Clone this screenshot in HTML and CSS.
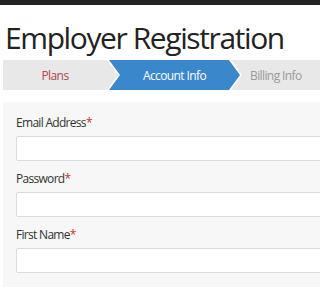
FILE: index.html
```html
<!DOCTYPE html>
<html>
<head>
<meta charset="utf-8">
<link rel="stylesheet" href="styles.css">
</head>
<body>
<div class="topbar"></div>
<div class="page">
  <h1 class="title">Employer Registration</h1>
  <div class="steps">
    <div class="step step-first done">Plans</div>
    <div class="step active">Account Info</div>
    <div class="step pending">Billing Info</div>
  </div>
  <div class="panel">
    <div class="field">
      <label class="label">Email Address<span class="req">*</span></label>
      <div class="input"></div>
    </div>
    <div class="field">
      <label class="label">Password<span class="req">*</span></label>
      <div class="input"></div>
    </div>
    <div class="field">
      <label class="label">First Name<span class="req">*</span></label>
      <div class="input"></div>
    </div>
  </div>
</div>
</body>
</html>
```
FILE: styles.css
```css
html, body {
  margin: 0;
  padding: 0;
  background: #fff;
  overflow: hidden;
}
body {
  font-family: "Open Sans", "Liberation Sans", sans-serif;
  color: #333;
}
.topbar {
  height: 5px;
  background: #222;
}
.page {
  padding: 0 0 0 3px;
}
.title {
  margin: 0;
  padding: 12px 0 0 2px;
  font-size: 30px;
  font-weight: 400;
  line-height: 42px;
  color: #222;
  letter-spacing: -1.4px;
  white-space: nowrap;
}
.steps {
  display: flex;
  margin-top: 1px;
  height: 30px;
}
.step {
  display: flex;
  align-items: center;
  justify-content: center;
  font-size: 12px;
  letter-spacing: -0.6px;
  height: 30px;
  background: #e8e8e8;
  color: #999;
  clip-path: polygon(0 0, calc(100% - 11px) 0, 100% 50%, calc(100% - 11px) 100%, 0 100%, 11px 50%);
  margin-left: -9px;
  width: 131px;
  flex: none;
  box-sizing: border-box;
  padding-left: 11px;
  padding-right: 11px;
  white-space: nowrap;
}
.step-first {
  margin-left: 0;
  width: 115px;
  padding-left: 0;
  clip-path: polygon(0 0, calc(100% - 11px) 0, 100% 50%, calc(100% - 11px) 100%, 0 100%);
}
.done { color: #b0454a; }
.active { background: #3a87cb; color: #fff; }
.pending { justify-content: flex-start; padding-left: 19px; }
.panel {
  margin-top: 12px;
  background: #f7f7f7;
  padding: 12px 0 14px 13px;
}
.field {
  margin-bottom: 9px;
}
.field:last-child { margin-bottom: 0; }
.label {
  display: block;
  font-size: 12px;
  letter-spacing: -0.7px;
  line-height: 18px;
  color: #333;
  margin-bottom: 4px;
}
.req { color: #c9302c; }
.input {
  height: 23px;
  background: #fff;
  border: 1px solid #dcdcdc;
  border-radius: 2px;
  margin-right: -40px;
}
```
